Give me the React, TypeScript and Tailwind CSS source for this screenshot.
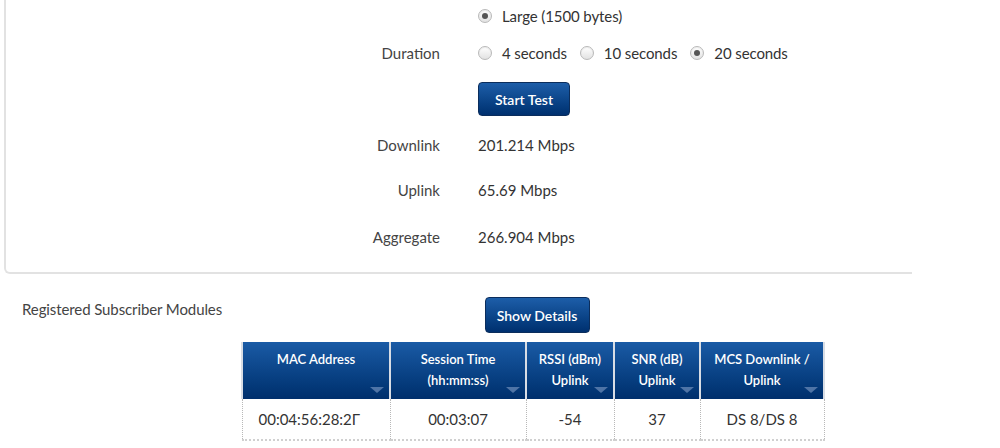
import React from 'react';

const font = { fontFamily: 'Lato, "Open Sans", "Liberation Sans", sans-serif' };

function Radio({ checked, label }: { checked?: boolean; label: string }) {
  return (
    <label className="flex items-center gap-[10px] mr-[13px]">
      <span className="w-[14px] h-[14px] rounded-full border border-[#b9b9b9] bg-gradient-to-b from-[#ffffff] to-[#e2e2e2] flex items-center justify-center shadow-[inset_0_1px_1px_rgba(0,0,0,0.08)]">
        {checked && <span className="w-[6px] h-[6px] rounded-full bg-[#555]" />}
      </span>
      <span className="tracking-[-0.1px]">{label}</span>
    </label>
  );
}

function Row({ label, h, children }: { label: string; h: string; children: React.ReactNode }) {
  return (
    <div className={`flex items-center ${h}`}>
      <div className="w-[434px] text-right text-[#444]">{label}</div>
      <div className="pl-[38px] flex items-center text-[#333]">{children}</div>
    </div>
  );
}

function BlueButton({ children, className }: { children: React.ReactNode; className: string }) {
  return (
    <button className={`rounded-[4px] border border-[#0b2d5c] bg-gradient-to-b from-[#1d5ea9] to-[#00306f] text-white text-[14px] font-semibold ${className}`}>
      {children}
    </button>
  );
}

const cols = [
  { w: 'w-[148px]', head: ['MAC Address'], val: '00:04:56:28:2Γ', left: true },
  { w: 'w-[136px]', head: ['Session Time', '(hh:mm:ss)'], val: '00:03:07' },
  { w: 'w-[88px]', head: ['RSSI (dBm)', 'Uplink'], val: '-54' },
  { w: 'w-[86px]', head: ['SNR (dB)', 'Uplink'], val: '37' },
  { w: 'w-[124px]', head: ['MCS Downlink /', 'Uplink'], val: 'DS 8/DS 8' },
];

export default function App() {
  return (
    <div className="w-[1000px] h-[448px] bg-white overflow-hidden text-[15px]" style={font}>
      {/* test panel */}
      <div className="ml-[4px] w-[908px] border-l-2 border-b-2 border-[#e2e2e2] rounded-bl-[6px] pb-[4px]">
        <Row label="" h="h-[32px]">
          <Radio checked label="Large (1500 bytes)" />
        </Row>
        <Row label="Duration" h="h-[42px]">
          <Radio label="4 seconds" />
          <Radio label="10 seconds" />
          <Radio checked label="20 seconds" />
        </Row>
        <div className="pl-[472px] pt-[8px]">
          <BlueButton className="w-[92px] h-[34px]">Start Test</BlueButton>
        </div>
        <Row label="Downlink" h="h-[58px]">201.214 Mbps</Row>
        <Row label="Uplink" h="h-[32px]">65.69 Mbps</Row>
        <Row label="Aggregate" h="h-[62px]">266.904 Mbps</Row>
      </div>

      {/* subscriber modules */}
      <div className="flex pl-[22px] mt-[23px]">
        <div className="w-[220px] pt-[1px] text-[15px] text-[#444] tracking-[-0.1px]">Registered Subscriber Modules</div>
        <div className="w-[582px] flex flex-col items-center">
          <BlueButton className="w-[105px] h-[36px] ml-[8px]">Show Details</BlueButton>
          <table className="mt-[9px] table-fixed border-collapse w-[582px]">
            <thead>
              <tr>
                {cols.map((c, i) => (
                  <th
                    key={i}
                    className={`${c.w} h-[57px] relative align-top pt-[7px] bg-gradient-to-b from-[#1a5ba6] to-[#002f6c] text-white text-[13px] font-semibold leading-[21px] border-x-2 border-[#d8dde5]`}
                  >
                    {c.head.map((t) => (
                      <div key={t}>{t}</div>
                    ))}
                    <span className="absolute right-[5px] bottom-[6px] w-0 h-0 border-l-[7px] border-r-[7px] border-t-[6px] border-l-transparent border-r-transparent border-t-[#4f74a6]" />
                  </th>
                ))}
              </tr>
            </thead>
            <tbody>
              <tr>
                {cols.map((c, i) => (
                  <td
                    key={i}
                    className={`h-[41px] ${c.left ? 'text-left pl-[16px]' : 'text-center'} text-[#333] border-x border-dotted border-[#b8b8b8] border-b-2 border-b-solid border-b-[#d0d0d0]`}
                  >
                    {c.val}
                  </td>
                ))}
              </tr>
            </tbody>
          </table>
        </div>
      </div>
    </div>
  );
}
